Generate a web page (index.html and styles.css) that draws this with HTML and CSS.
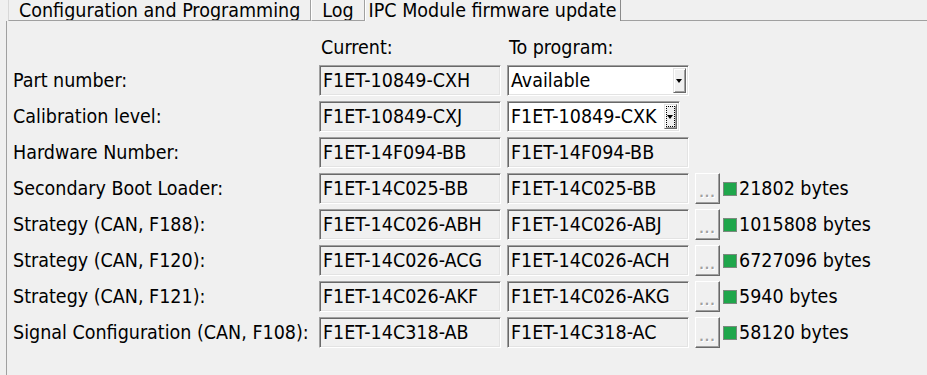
FILE: index.html
```html
<!DOCTYPE html>
<html lang="en">
<head>
    <meta charset="UTF-8">
    <title>IPC Module firmware update</title>
    <link rel="stylesheet" href="styles.css">
</head>
<body>
    <div class="tabs">
        <div class="tab first">Configuration and Programming</div>
        <div class="tab">Log</div>
        <div class="tab active">IPC Module firmware update</div>
        <div class="tab-fill"></div>
    </div>
    <div class="panel">
        <div class="grid">
            <div class="head"></div>
            <div class="head">Current:</div>
            <div class="head">To program:</div>
            <div class="head"></div>
            <div class="head"></div>

            <div class="label">Part number:</div>
            <div class="field">F1ET-10849-CXH</div>
            <div class="combo">Available<span class="drop"></span></div>
            <div></div>
            <div></div>

            <div class="label">Calibration level:</div>
            <div class="field">F1ET-10849-CXJ</div>
            <div class="combo short">F1ET-10849-CXK<span class="drop focus"></span></div>
            <div></div>
            <div></div>

            <div class="label">Hardware Number:</div>
            <div class="field">F1ET-14F094-BB</div>
            <div class="field">F1ET-14F094-BB</div>
            <div></div>
            <div></div>

            <div class="label">Secondary Boot Loader:</div>
            <div class="field">F1ET-14C025-BB</div>
            <div class="field">F1ET-14C025-BB</div>
            <div class="browse">...</div>
            <div class="status"><span class="led"></span>21802 bytes</div>

            <div class="label">Strategy (CAN, F188):</div>
            <div class="field">F1ET-14C026-ABH</div>
            <div class="field">F1ET-14C026-ABJ</div>
            <div class="browse">...</div>
            <div class="status"><span class="led"></span>1015808 bytes</div>

            <div class="label">Strategy (CAN, F120):</div>
            <div class="field">F1ET-14C026-ACG</div>
            <div class="field">F1ET-14C026-ACH</div>
            <div class="browse">...</div>
            <div class="status"><span class="led"></span>6727096 bytes</div>

            <div class="label">Strategy (CAN, F121):</div>
            <div class="field">F1ET-14C026-AKF</div>
            <div class="field">F1ET-14C026-AKG</div>
            <div class="browse">...</div>
            <div class="status"><span class="led"></span>5940 bytes</div>

            <div class="label">Signal Configuration (CAN, F108):</div>
            <div class="field">F1ET-14C318-AB</div>
            <div class="field">F1ET-14C318-AC</div>
            <div class="browse">...</div>
            <div class="status"><span class="led"></span>58120 bytes</div>
        </div>
    </div>
</body>
</html>
```

FILE: styles.css
```css
body {
    margin: 0;
    height: 375px;
    background-color: #f0f0f0;
    font-family: "DejaVu Sans", sans-serif;
    font-stretch: condensed;
    font-size: 19.5px;
    color: #000;
    overflow: hidden;
}
.tabs {
    display: flex;
    height: 21px;
    padding-left: 8px;
}
.tab {
    box-sizing: border-box;
    height: 21px;
    line-height: 22px;
    padding: 0 10px;
    border-left: 1px solid #fff;
    border-right: 1px solid #a0a0a0;
    border-bottom: 1px solid #a0a0a0;
    white-space: nowrap;
    overflow: hidden;
}
.tab.first {
    border-left: 1px solid #d8d8d8;
}
.tab.active {
    padding: 0 3px;
    border-bottom: none;
    border-right: 1px solid #8a8a8a;
}
.tab-fill {
    flex: 1;
    border-bottom: 1px solid #a0a0a0;
}
.panel {
    margin-left: 6px;
    height: 354px;
    border-left: 1px solid #a0a0a0;
}
.grid {
    display: grid;
    grid-template-columns: 300px 182px 182px 25px auto;
    grid-template-rows: 39px repeat(8, 31px);
    column-gap: 6px;
    row-gap: 5px;
    padding-left: 6px;
}
.head {
    align-self: end;
    padding-left: 2px;
    line-height: 22px;
    margin-bottom: 1px;
}
.label {
    align-self: center;
    white-space: nowrap;
}
.field, .combo {
    box-sizing: border-box;
    height: 31px;
    line-height: 30px;
    padding-left: 3px;
    border: 1px solid;
    border-color: #a0a0a0 #fff #fff #a0a0a0;
    box-shadow: inset 1px 1px #696969, inset -1px -1px #e3e3e3;
    white-space: nowrap;
    overflow: hidden;
}
.combo {
    display: flex;
    justify-content: space-between;
    background-color: #fff;
    padding-right: 2px;
}
.combo.short {
    width: 173px;
}
.drop {
    position: relative;
    flex: none;
    box-sizing: border-box;
    width: 13px;
    height: 25px;
    margin-top: 2px;
    background-color: #f0f0f0;
    border: 1px solid;
    border-color: #e3e3e3 #696969 #696969 #e3e3e3;
    box-shadow: inset 1px 1px #fff, inset -1px -1px #a0a0a0;
}
.drop::after {
    content: "";
    position: absolute;
    left: 2px;
    top: 10px;
    border-left: 3.5px solid transparent;
    border-right: 3.5px solid transparent;
    border-top: 4px solid #000;
}
.drop.focus {
    outline: 1px dotted #000;
    outline-offset: -3px;
}
.browse {
    box-sizing: border-box;
    height: 31px;
    border: 1px solid;
    border-color: #fff #696969 #696969 #fff;
    box-shadow: inset -1px -1px #a0a0a0;
    color: #a0a0a0;
    text-shadow: 1px 1px #fff;
    font-size: 13px;
    font-weight: bold;
    letter-spacing: 1px;
    text-align: center;
    line-height: 38px;
}
.status {
    display: flex;
    align-items: center;
    margin-left: -3px;
    white-space: nowrap;
}
.led {
    box-sizing: border-box;
    flex: none;
    width: 14px;
    height: 14px;
    margin-right: 2px;
    background-color: #1fa64b;
    border: 1px solid #7a8a7e;
}
```
